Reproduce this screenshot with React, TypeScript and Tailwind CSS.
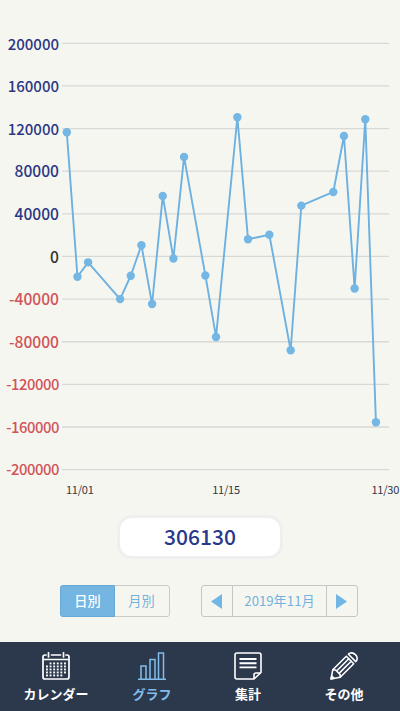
import type { ReactNode } from 'react';
import clsx from 'clsx';

const ticks = [200000, 160000, 120000, 80000, 40000, 0, -40000, -80000, -120000, -160000, -200000];

const dailyData = [
  { day: 1, total: 116500 },
  { day: 2, total: -19000 },
  { day: 3, total: -5500 },
  { day: 6, total: -40000 },
  { day: 7, total: -18100 },
  { day: 8, total: 10600 },
  { day: 9, total: -44600 },
  { day: 10, total: 56800 },
  { day: 11, total: -1900 },
  { day: 12, total: 93400 },
  { day: 14, total: -17800 },
  { day: 15, total: -75500 },
  { day: 17, total: 130600 },
  { day: 18, total: 16200 },
  { day: 20, total: 20400 },
  { day: 22, total: -88000 },
  { day: 23, total: 47700 },
  { day: 26, total: 60500 },
  { day: 27, total: 113000 },
  { day: 28, total: -30000 },
  { day: 29, total: 128800 },
  { day: 30, total: -155500 },
];

const ROW = 42.63;
const toX = (day: number) => 4.8 + (day - 1) * 10.66;
const toY = (value: number) => ROW / 2 + ((200000 - value) / 40000) * ROW;

// long labels are tightened to stay inside the axis column
const tickSize = (tick: number) => {
  const length = String(tick).length;
  if (length > 6) return 'text-[14.8px] tracking-[-0.45px]';
  return tick > 99999 ? 'text-[15px]' : 'text-[15.6px]';
};

function LineChart() {
  const line = dailyData.map((d) => `${toX(d.day)},${toY(d.total)}`).join(' ');

  return (
    <svg width="338" height="469" className="block shrink-0">
      {ticks.map((tick) => (
        <line key={tick} x1="0" x2="327" y1={toY(tick)} y2={toY(tick)} stroke="#d7d9d6" strokeWidth="1.3" />
      ))}
      <polyline points={line} fill="none" stroke="#6db1e0" strokeWidth="1.9" strokeLinejoin="round" />
      {dailyData.map((d) => (
        <circle key={d.day} cx={toX(d.day)} cy={toY(d.total)} r="4.2" fill="#74b6e4" />
      ))}
    </svg>
  );
}

function CalendarIcon() {
  const dots = [];
  for (let row = 0; row < 5; row++) {
    for (let col = 0; col < 6; col++) {
      if (row === 0 && col === 0) continue;
      if (row === 4 && col > 4) continue;
      dots.push(<rect key={`${row}-${col}`} x={4 + col * 3.6} y={10.5 + row * 3} width="1.9" height="1.9" fill="currentColor" />);
    }
  }
  return (
    <svg width="28" height="28" viewBox="0 0 28 28" fill="none" stroke="currentColor" strokeWidth="1.7" strokeLinecap="round">
      <path d="M4 3H3Q1 3 1 5V25Q1 27 3 27H25Q27 27 27 25V5Q27 3 25 3H24M9.5 3H18.5M1 7.5H27M6.5 .8V5M21.5 .8V5" />
      <g stroke="none">{dots}</g>
    </svg>
  );
}

function GraphIcon() {
  return (
    <svg width="28" height="28" viewBox="0 0 28 28" fill="none" stroke="currentColor" strokeWidth="1.5">
      <path d="M0 27.2H28M3 27V14H8V27M12 27V7.5H17V27M20.5 27V1H25.5V27" />
    </svg>
  );
}

function NoteIcon() {
  return (
    <svg width="28" height="28" viewBox="0 0 28 28" fill="none" stroke="currentColor" strokeWidth="1.6" strokeLinejoin="round">
      <path d="M18.5 27H3Q1 27 1 25V3Q1 1 3 1H25Q27 1 27 3V20.5L20 27H18.5M20 27V23Q20 21 22 21H27" />
      <path d="M5.5 7H22.5M5.5 11.2H22.5M5.5 15.4H22.5" strokeWidth="1.9" />
    </svg>
  );
}

function PencilIcon() {
  return (
    <svg width="28" height="28" viewBox="0 0 28 28" fill="none" stroke="currentColor" strokeWidth="1.6" strokeLinejoin="round" strokeLinecap="round">
      <path d="M1 27L2.8 17.8L16.3 4.3L23.7 11.7L10.2 25.2Z" />
      <path d="M2.8 17.8L5.6 18L10 22.4L10.2 25.2M6.6 19L18.8 6.8M9 21.4L21.2 9.2" />
      <path d="M18.4 2.2L19.4 1.4Q22.6 -.2 25.4 2.6Q28.2 5.4 26.6 8.6L25.8 9.6Z" />
      <path d="M1.2 26.8L1.8 24L4 26.2Z" fill="currentColor" />
    </svg>
  );
}

function NavItem({ label, active, children }: { label: string; active?: boolean; children: ReactNode }) {
  return (
    <button className={clsx('flex w-24 flex-col items-center', active ? 'text-[#80bdea]' : 'text-white')}>
      {children}
      <span className="mt-1 text-[13px] font-bold leading-5">{label}</span>
    </button>
  );
}

export default function App() {
  return (
    <div className="flex h-[711px] w-[400px] flex-col overflow-hidden bg-[#f6f6f1] font-['Noto_Sans_CJK_JP',sans-serif]">
      <div className="flex pt-[22px]">
        <div className="w-[59px] shrink-0">
          {ticks.map((tick) => (
            <div
              key={tick}
              className={clsx(
                'flex h-[42.63px] items-center justify-end font-medium leading-none',
                tickSize(tick),
                tick > 0 && 'text-[#2b3883]',
                tick === 0 && 'text-[#333333]',
                tick < 0 && 'text-[#d05458]'
              )}
            >
              {tick}
            </div>
          ))}
        </div>
        <div className="w-[3px] shrink-0" />
        <LineChart />
      </div>

      {/* Date axis */}
      <div className="-mt-2.5 flex h-4 justify-between pl-[66px] pr-px text-[11px] leading-4 tracking-[-0.25px] text-[#333745]">
        <span>11/01</span>
        <span className="pr-[13px]">11/15</span>
        <span>11/30</span>
      </div>

      {/* Total */}
      <div className="mx-auto mt-[18px] flex h-11 w-[166px] items-center justify-center rounded-[15px] border-[3px] border-[#efeff0] bg-white pb-0.5 text-[21px] font-medium leading-none text-[#29378c]">
        306130
      </div>

      {/* Period controls */}
      <div className="mt-[26px] flex h-8 pl-[60px] text-[13.2px] text-[#72b2dc]">
        <div className="flex w-[110px] rounded-[3px] border border-[#cbcbc8]">
          <button className="-m-px w-[55px] rounded-l-[3px] border border-[#66a9d6] bg-[#75b5e2] pb-px font-medium text-white">日別</button>
          <button className="flex-1 pb-px">月別</button>
        </div>
        <div className="ml-[31px] flex w-[157px] rounded-[3px] border border-[#c5c5c2]">
          <button className="flex w-[31px] items-center justify-center border-r border-[#c5c5c2] pr-px">
            <svg width="11" height="15" viewBox="0 0 11 15" fill="#70b7e5">
              <path d="M11 0V15L0 7.5Z" />
            </svg>
          </button>
          <span className="flex flex-1 items-center justify-center pb-px">2019年11月</span>
          <button className="flex w-[31px] items-center justify-center border-l border-[#c5c5c2] pr-0.5">
            <svg width="11" height="15" viewBox="0 0 11 15" fill="#70b7e5">
              <path d="M0 0V15L11 7.5Z" />
            </svg>
          </button>
        </div>
      </div>

      <nav className="mt-auto flex h-[69px] shrink-0 justify-center bg-[#2c384c] pt-2.5">
        <NavItem label="カレンダー">
          <CalendarIcon />
        </NavItem>
        <NavItem label="グラフ" active>
          <GraphIcon />
        </NavItem>
        <NavItem label="集計">
          <NoteIcon />
        </NavItem>
        <NavItem label="その他">
          <PencilIcon />
        </NavItem>
      </nav>
    </div>
  );
}
